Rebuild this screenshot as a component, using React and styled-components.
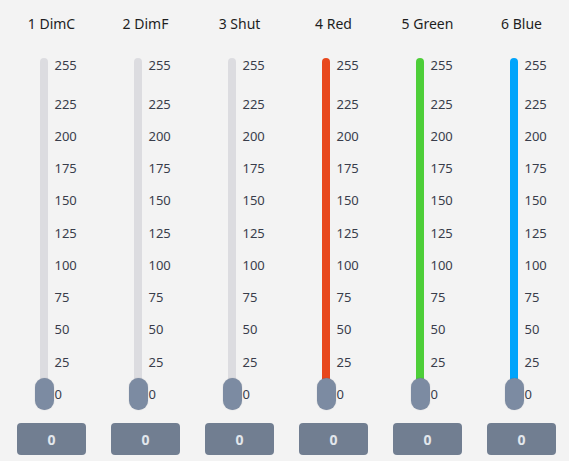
import styled, { createGlobalStyle } from 'styled-components'

const Global = createGlobalStyle`
  * {
    margin: 0;
    box-sizing: border-box;
  }

  body {
    background: #f3f3f3;
    font-family: "Noto Sans", "Open Sans", sans-serif;
  }
`

const channels = [
  { name: '1 DimC', color: '#dcdce0', value: 0 },
  { name: '2 DimF', color: '#dcdce0', value: 0 },
  { name: '3 Shut', color: '#dcdce0', value: 0 },
  { name: '4 Red', color: '#e8471c', value: 0 },
  { name: '5 Green', color: '#4dce38', value: 0 },
  { name: '6 Blue', color: '#00a4fb', value: 0 },
]

const ticks = [255, 225, 200, 175, 150, 125, 100, 75, 50, 25, 0]

const ZERO_Y = 348
const TOP_Y = 19
const toY = (v) => ZERO_Y - (v / 255) * (ZERO_Y - TOP_Y)

const Board = styled.div`
  display: flex;
  padding-left: 4.5px;
  height: 461px;
`

const Column = styled.div`
  width: 94px;
  display: flex;
  flex-direction: column;
  align-items: center;
`

const Label = styled.div`
  height: 46px;
  display: flex;
  align-items: center;
  font-size: 14px;
  color: #1e1e1e;
`

const SliderBox = styled.div`
  width: 94px;
  height: 370px;
  margin-bottom: 7px;
  display: grid;
  grid-template-columns: 30px 19px 1fr;
`

const TrackWrap = styled.div`
  grid-column: 2;
  position: relative;
  display: flex;
  justify-content: center;
`

const Track = styled.div`
  width: 8px;
  margin-top: 12px;
  height: 340px;
  border-radius: 4px;
  background: ${({ color }) => color};
`

const Thumb = styled.div`
  position: absolute;
  left: 0;
  width: 19px;
  height: 32px;
  border-radius: 10px;
  background: #7c8ba2;
  transform: translateY(-50%);
  box-shadow: 0 0 1px rgba(60, 70, 90, 0.4);
`

const Scale = styled.div`
  position: relative;
  padding-left: 1px;
`

const Tick = styled.span`
  position: absolute;
  left: 1px;
  font-size: 13px;
  line-height: 1;
  color: #393d4b;
  transform: translateY(-50%);
`

const ValueButton = styled.button`
  width: 69px;
  height: 32px;
  border: none;
  border-radius: 4px;
  background: #717e91;
  color: #e2e6ec;
  font-family: inherit;
  font-size: 14px;
  font-weight: 700;
`

export default function App() {
  return (
    <>
      <Global />
      <Board>
        {channels.map((ch) => (
          <Column key={ch.name}>
            <Label>{ch.name}</Label>
            <SliderBox>
              <TrackWrap>
                <Track color={ch.color} />
                <Thumb style={{ top: toY(ch.value) }} />
              </TrackWrap>
              <Scale>
                {ticks.map((t) => (
                  <Tick key={t} style={{ top: toY(t) }}>{t}</Tick>
                ))}
              </Scale>
            </SliderBox>
            <ValueButton>{ch.value}</ValueButton>
          </Column>
        ))}
      </Board>
    </>
  )
}
